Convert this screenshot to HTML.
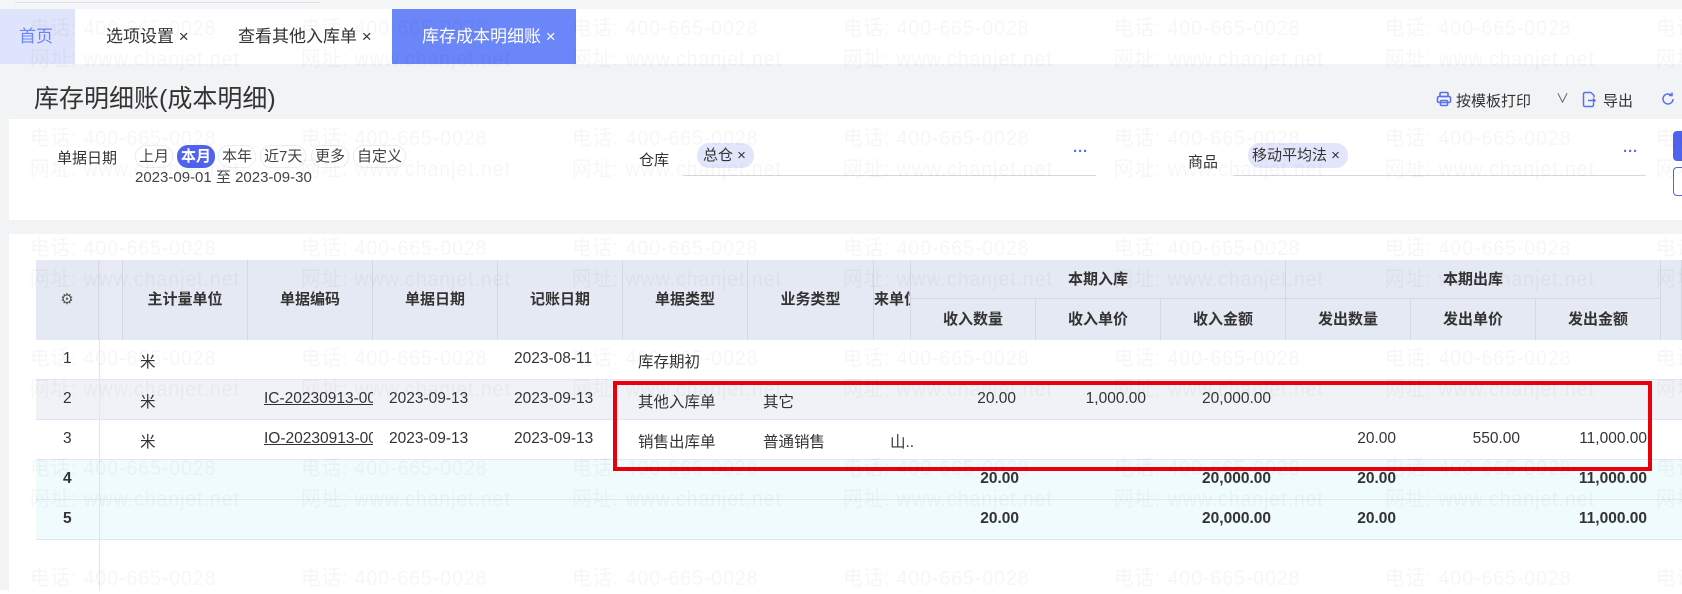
<!DOCTYPE html>
<html><head><meta charset="utf-8">
<style>
*{margin:0;padding:0;box-sizing:border-box}
body{width:1682px;height:590px;overflow:hidden;background:#fff;font-family:"Liberation Sans","Noto Sans CJK SC",sans-serif;font-size:15px;color:#333;position:relative}
.abs{position:absolute}
.wm{position:absolute;color:rgba(0,0,0,0.035);font-size:21px;line-height:31px;white-space:nowrap;z-index:50;pointer-events:none;letter-spacing:1px;transform:scaleX(0.93);transform-origin:left top}
.tab{position:absolute;top:9px;height:55px;line-height:55px;font-size:17px;color:#333}
.btn{position:absolute;top:145px;height:23px;line-height:22px;border:1px solid #e6eef4;border-radius:11px;padding:0 3px;font-size:15px;color:#444}
.hd{position:absolute;background:#e5e9f3;font-weight:bold;font-size:15px;color:#333;text-align:center;border-right:1px solid #d3d8e4}
.cell{position:absolute;font-size:15.5px;white-space:nowrap;overflow:hidden}
.r{text-align:right}
.b{font-weight:bold}
.row{position:absolute;left:36px;width:1646px;height:40px;border-bottom:1px solid #e3e6ee}
</style></head><body>
<div class="abs" style="left:0;top:0;width:1682px;height:9px;background:#f5f6f8"></div>
<div class="abs" style="left:15px;top:2px;width:305px;height:1px;background:#dcdfe6"></div>
<div class="abs" style="left:0;top:9px;width:1682px;height:55px;background:#fff"></div>
<div class="tab" style="left:0;width:75px;background:#dfe3fb;color:#6a86f8;padding-left:19px">首页</div>
<div class="tab" style="left:106px">选项设置 ×</div>
<div class="tab" style="left:238px">查看其他入库单 ×</div>
<div class="tab" style="left:392px;width:184px;background:#6a86f8;color:#fff;padding-left:30px">库存成本明细账 ×</div>
<div class="abs" style="left:0;top:64px;width:1682px;height:55px;background:#f2f3f5"></div>
<div class="abs" style="left:34px;top:79px;font-size:25px;color:#333">库存明细账(成本明细)</div>
<svg class="abs" style="left:1436px;top:91px" width="16" height="16" viewBox="0 0 16 16" fill="none" stroke="#5b6ef0" stroke-width="1.6"><rect x="4" y="1.5" width="8" height="4" rx="1"/><rect x="1.5" y="5.5" width="13" height="6" rx="1.5"/><rect x="4.5" y="9.5" width="7" height="5" rx="1"/></svg>
<div class="abs" style="left:1456px;top:90px;font-size:15px;color:#333">按模板打印</div>
<div class="abs" style="left:1556px;top:88px;font-size:13px;color:#555">∨</div>
<svg class="abs" style="left:1582px;top:91px" width="14" height="17" viewBox="0 0 14 17" fill="none" stroke="#5b6ef0" stroke-width="1.5"><path d="M9 1.5H3a1.5 1.5 0 0 0-1.5 1.5v11A1.5 1.5 0 0 0 3 15.5h7A1.5 1.5 0 0 0 11.5 14v-2M9 1.5l3 3v2M6 9.5h7M11 7.5l2 2-2 2"/></svg>
<div class="abs" style="left:1603px;top:90px;font-size:15px;color:#333">导出</div>
<svg class="abs" style="left:1660px;top:91px" width="16" height="16" viewBox="0 0 16 16" fill="none" stroke="#5b6ef0" stroke-width="1.5"><path d="M13 8a5 5 0 1 1-1.5-3.6M12 1.5v3h-3"/></svg>
<div class="abs" style="left:0;top:119px;width:9px;height:101px;background:#f2f3f5"></div>
<div class="abs" style="left:0;top:220px;width:1682px;height:14px;background:#f2f3f5"></div>
<div class="abs" style="left:0;top:234px;width:9px;height:356px;background:#f2f3f5"></div>
<div class="abs" style="left:57px;top:147px;font-size:15px">单据日期</div>
<div class="btn" style="left:135px">上月</div>
<div class="btn" style="left:177px;background:#4f63ee;color:#fff;border-color:#4f63ee;font-weight:bold">本月</div>
<div class="btn" style="left:218px">本年</div>
<div class="btn" style="left:260px">近7天</div>
<div class="btn" style="left:311px">更多</div>
<div class="btn" style="left:353px">自定义</div>
<div class="abs" style="left:135px;top:166px;font-size:15px;color:#444">2023-09-01 至 2023-09-30</div>
<div class="abs" style="left:639px;top:149px">仓库</div>
<div class="abs" style="left:697px;top:143px;width:57px;height:25px;line-height:25px;background:#e3e6fb;border-radius:12px;padding-left:6px">总仓 ×</div>
<div class="abs" style="left:683px;top:175px;width:413px;height:1px;background:#d6d8de"></div>
<div class="abs" style="left:1073px;top:143px;color:#5b6ef0;font-weight:bold">···</div>
<div class="abs" style="left:1188px;top:151px">商品</div>
<div class="abs" style="left:1248px;top:143px;width:100px;height:25px;line-height:25px;background:#e3e6fb;border-radius:12px;padding-left:4px">移动平均法 ×</div>
<div class="abs" style="left:1233px;top:175px;width:413px;height:1px;background:#d6d8de"></div>
<div class="abs" style="left:1623px;top:143px;color:#5b6ef0;font-weight:bold">···</div>
<div class="abs" style="left:1673px;top:131px;width:20px;height:30px;background:#4f63ee;border-radius:4px"></div>
<div class="abs" style="left:1673px;top:167px;width:20px;height:29px;border:1px solid #4f63ee;border-radius:4px"></div>
<div class="hd" style="left:36px;top:260px;width:63px;height:80px;line-height:80px;font-weight:normal;color:#555">⚙</div>
<div class="hd" style="left:99px;top:260px;width:24px;height:80px;background:#e8ebf3"></div>
<div class="hd" style="left:123px;top:260px;width:125px;height:80px;line-height:80px">主计量单位</div>
<div class="hd" style="left:248px;top:260px;width:125px;height:80px;line-height:80px">单据编码</div>
<div class="hd" style="left:373px;top:260px;width:125px;height:80px;line-height:80px">单据日期</div>
<div class="hd" style="left:498px;top:260px;width:125px;height:80px;line-height:80px">记账日期</div>
<div class="hd" style="left:623px;top:260px;width:125px;height:80px;line-height:80px">单据类型</div>
<div class="hd" style="left:748px;top:260px;width:126px;height:80px;line-height:80px">业务类型</div>
<div class="hd" style="left:874px;top:260px;width:37px;height:80px;line-height:80px;text-align:left;overflow:hidden;white-space:nowrap">来单位</div>
<div class="hd" style="left:911px;top:260px;width:375px;height:39px;line-height:39px;border-bottom:1px solid #d3d8e4">本期入库</div>
<div class="hd" style="left:1286px;top:260px;width:375px;height:39px;line-height:39px;border-bottom:1px solid #d3d8e4">本期出库</div>
<div class="hd" style="left:1661px;top:260px;width:21px;height:80px"></div>
<div class="hd" style="left:911px;top:299px;width:125px;height:41px;line-height:41px">收入数量</div>
<div class="hd" style="left:1036px;top:299px;width:125px;height:41px;line-height:41px">收入单价</div>
<div class="hd" style="left:1161px;top:299px;width:125px;height:41px;line-height:41px">收入金额</div>
<div class="hd" style="left:1286px;top:299px;width:125px;height:41px;line-height:41px">发出数量</div>
<div class="hd" style="left:1411px;top:299px;width:125px;height:41px;line-height:41px">发出单价</div>
<div class="hd" style="left:1536px;top:299px;width:125px;height:41px;line-height:41px">发出金额</div>
<div class="row" style="top:340px"></div>
<div class="row" style="top:380px;background:#f1f2f7"></div>
<div class="row" style="top:420px"></div>
<div class="row" style="top:460px;background:#effbfd"></div>
<div class="row" style="top:500px;background:#effbfd"></div>
<div class="abs" style="left:99px;top:260px;width:1px;height:330px;background:#e3e6ee;box-shadow:2px 0 4px rgba(0,0,0,0.06)"></div>
<div class="cell" style="left:63px;top:350px">1</div>
<div class="cell" style="left:140px;top:350px">米</div>
<div class="cell" style="left:514px;top:350px">2023-08-11</div>
<div class="cell" style="left:638px;top:350px">库存期初</div>
<div class="cell" style="left:63px;top:390px">2</div>
<div class="cell" style="left:140px;top:390px">米</div>
<div class="cell" style="left:264px;top:390px;width:109px;text-decoration:underline">IC-20230913-0001</div>
<div class="cell" style="left:389px;top:390px">2023-09-13</div>
<div class="cell" style="left:514px;top:390px">2023-09-13</div>
<div class="cell" style="left:638px;top:390px">其他入库单</div>
<div class="cell" style="left:763px;top:390px">其它</div>
<div class="cell r" style="left:911px;width:105px;top:390px">20.00</div>
<div class="cell r" style="left:1036px;width:110px;top:390px">1,000.00</div>
<div class="cell r" style="left:1161px;width:110px;top:390px">20,000.00</div>
<div class="cell" style="left:63px;top:430px">3</div>
<div class="cell" style="left:140px;top:430px">米</div>
<div class="cell" style="left:264px;top:430px;width:109px;text-decoration:underline">IO-20230913-0001</div>
<div class="cell" style="left:389px;top:430px">2023-09-13</div>
<div class="cell" style="left:514px;top:430px">2023-09-13</div>
<div class="cell" style="left:638px;top:430px">销售出库单</div>
<div class="cell" style="left:763px;top:430px">普通销售</div>
<div class="cell" style="left:890px;top:430px">山..</div>
<div class="cell r" style="left:1286px;width:110px;top:430px">20.00</div>
<div class="cell r" style="left:1411px;width:109px;top:430px">550.00</div>
<div class="cell r" style="left:1536px;width:111px;top:430px">11,000.00</div>
<div class="cell b" style="left:63px;top:470px">4</div>
<div class="cell r b" style="left:911px;width:108px;top:470px">20.00</div>
<div class="cell r b" style="left:1161px;width:110px;top:470px">20,000.00</div>
<div class="cell r b" style="left:1286px;width:110px;top:470px">20.00</div>
<div class="cell r b" style="left:1536px;width:111px;top:470px">11,000.00</div>
<div class="cell b" style="left:63px;top:510px">5</div>
<div class="cell r b" style="left:911px;width:108px;top:510px">20.00</div>
<div class="cell r b" style="left:1161px;width:110px;top:510px">20,000.00</div>
<div class="cell r b" style="left:1286px;width:110px;top:510px">20.00</div>
<div class="cell r b" style="left:1536px;width:111px;top:510px">11,000.00</div>
<div class="abs" style="left:613px;top:381px;width:1039px;height:90px;border:4px solid #e8000b;z-index:40"></div>
<div class="wm" style="left:30px;top:13px">电话: 400-665-0028<br>网址: www.chanjet.net</div>
<div class="wm" style="left:301px;top:13px">电话: 400-665-0028<br>网址: www.chanjet.net</div>
<div class="wm" style="left:572px;top:13px">电话: 400-665-0028<br>网址: www.chanjet.net</div>
<div class="wm" style="left:843px;top:13px">电话: 400-665-0028<br>网址: www.chanjet.net</div>
<div class="wm" style="left:1114px;top:13px">电话: 400-665-0028<br>网址: www.chanjet.net</div>
<div class="wm" style="left:1385px;top:13px">电话: 400-665-0028<br>网址: www.chanjet.net</div>
<div class="wm" style="left:1656px;top:13px">电话: 400-665-0028<br>网址: www.chanjet.net</div>
<div class="wm" style="left:30px;top:123px">电话: 400-665-0028<br>网址: www.chanjet.net</div>
<div class="wm" style="left:301px;top:123px">电话: 400-665-0028<br>网址: www.chanjet.net</div>
<div class="wm" style="left:572px;top:123px">电话: 400-665-0028<br>网址: www.chanjet.net</div>
<div class="wm" style="left:843px;top:123px">电话: 400-665-0028<br>网址: www.chanjet.net</div>
<div class="wm" style="left:1114px;top:123px">电话: 400-665-0028<br>网址: www.chanjet.net</div>
<div class="wm" style="left:1385px;top:123px">电话: 400-665-0028<br>网址: www.chanjet.net</div>
<div class="wm" style="left:1656px;top:123px">电话: 400-665-0028<br>网址: www.chanjet.net</div>
<div class="wm" style="left:30px;top:233px">电话: 400-665-0028<br>网址: www.chanjet.net</div>
<div class="wm" style="left:301px;top:233px">电话: 400-665-0028<br>网址: www.chanjet.net</div>
<div class="wm" style="left:572px;top:233px">电话: 400-665-0028<br>网址: www.chanjet.net</div>
<div class="wm" style="left:843px;top:233px">电话: 400-665-0028<br>网址: www.chanjet.net</div>
<div class="wm" style="left:1114px;top:233px">电话: 400-665-0028<br>网址: www.chanjet.net</div>
<div class="wm" style="left:1385px;top:233px">电话: 400-665-0028<br>网址: www.chanjet.net</div>
<div class="wm" style="left:1656px;top:233px">电话: 400-665-0028<br>网址: www.chanjet.net</div>
<div class="wm" style="left:30px;top:343px">电话: 400-665-0028<br>网址: www.chanjet.net</div>
<div class="wm" style="left:301px;top:343px">电话: 400-665-0028<br>网址: www.chanjet.net</div>
<div class="wm" style="left:572px;top:343px">电话: 400-665-0028<br>网址: www.chanjet.net</div>
<div class="wm" style="left:843px;top:343px">电话: 400-665-0028<br>网址: www.chanjet.net</div>
<div class="wm" style="left:1114px;top:343px">电话: 400-665-0028<br>网址: www.chanjet.net</div>
<div class="wm" style="left:1385px;top:343px">电话: 400-665-0028<br>网址: www.chanjet.net</div>
<div class="wm" style="left:1656px;top:343px">电话: 400-665-0028<br>网址: www.chanjet.net</div>
<div class="wm" style="left:30px;top:453px">电话: 400-665-0028<br>网址: www.chanjet.net</div>
<div class="wm" style="left:301px;top:453px">电话: 400-665-0028<br>网址: www.chanjet.net</div>
<div class="wm" style="left:572px;top:453px">电话: 400-665-0028<br>网址: www.chanjet.net</div>
<div class="wm" style="left:843px;top:453px">电话: 400-665-0028<br>网址: www.chanjet.net</div>
<div class="wm" style="left:1114px;top:453px">电话: 400-665-0028<br>网址: www.chanjet.net</div>
<div class="wm" style="left:1385px;top:453px">电话: 400-665-0028<br>网址: www.chanjet.net</div>
<div class="wm" style="left:1656px;top:453px">电话: 400-665-0028<br>网址: www.chanjet.net</div>
<div class="wm" style="left:30px;top:563px">电话: 400-665-0028</div>
<div class="wm" style="left:301px;top:563px">电话: 400-665-0028</div>
<div class="wm" style="left:572px;top:563px">电话: 400-665-0028</div>
<div class="wm" style="left:843px;top:563px">电话: 400-665-0028</div>
<div class="wm" style="left:1114px;top:563px">电话: 400-665-0028</div>
<div class="wm" style="left:1385px;top:563px">电话: 400-665-0028</div>
<div class="wm" style="left:1656px;top:563px">电话: 400-665-0028</div>
</body></html>
